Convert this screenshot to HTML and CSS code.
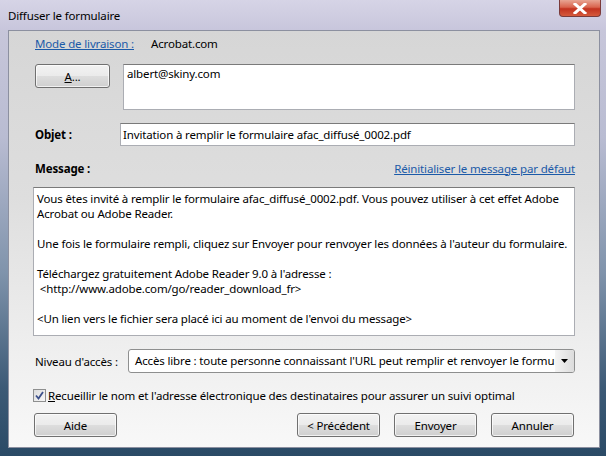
FILE: index.html
```html
<!DOCTYPE html>
<html lang="fr">
<head>
<meta charset="utf-8">
<title>Diffuser le formulaire</title>
<link rel="stylesheet" href="styles.css">
</head>
<body>
<div class="window">
  <div class="titlebar">
    <span class="title">Diffuser le formulaire</span>
    <span class="close"><svg width="14" height="11" viewBox="0 0 14 11"><path d="M2 1 L12 10 M12 1 L2 10" stroke="#fff" stroke-width="3" stroke-linecap="square"/></svg></span>
  </div>
  <div class="client">
    <div class="row row-mode">
      <a class="link">Mode de livraison :</a>
      <span class="mode-value">Acrobat.com</span>
    </div>
    <div class="row row-to">
      <button class="btn btn-a"><u>A</u>...</button>
      <div class="field recipients">albert@skiny.com</div>
    </div>
    <div class="row row-subject">
      <span class="label bold">Objet :</span>
      <div class="field subject">Invitation à remplir le formulaire afac_diffusé_0002.pdf</div>
    </div>
    <div class="row row-msghead">
      <span class="label bold">Message :</span>
      <a class="link">Réinitialiser le message par défaut</a>
    </div>
    <div class="field message">
      <p>Vous êtes invité à remplir le formulaire afac_diffusé_0002.pdf. Vous pouvez utiliser à cet effet Adobe Acrobat ou Adobe Reader.</p>
      <p>Une fois le formulaire rempli, cliquez sur Envoyer pour renvoyer les données à l'auteur du formulaire.</p>
      <p>Téléchargez gratuitement Adobe Reader 9.0 à l'adresse :<br>&nbsp;&lt;http://www.adobe.com/go/reader_download_fr&gt;</p>
      <p>&lt;Un lien vers le fichier sera placé ici au moment de l'envoi du message&gt;</p>
    </div>
    <div class="row row-access">
      <span class="label">Niveau d'accès :</span>
      <div class="select">
        <span class="select-text">Accès libre : toute personne connaissant l'URL peut remplir et renvoyer le formulaire</span>
        <span class="select-arrow"><svg width="7" height="4" viewBox="0 0 7 4"><path d="M0 0 H7 L3.5 4 Z" fill="#000"/></svg></span>
      </div>
    </div>
    <div class="row row-check">
      <span class="checkbox"><svg width="9" height="9" viewBox="0 0 9 9"><path d="M1 4.5 L3.5 7.5 L8 1" fill="none" stroke="#3b4f8a" stroke-width="1.8"/></svg></span>
      <span><u>R</u>ecueillir le nom et l'adresse électronique des destinataires pour assurer un suivi optimal</span>
    </div>
    <div class="row row-buttons">
      <button class="btn">Aide</button>
      <div class="btn-group">
        <button class="btn">&lt; Précédent</button>
        <button class="btn">Envoyer</button>
        <button class="btn">Annuler</button>
      </div>
    </div>
  </div>
</div>
</body>
</html>
```
FILE: styles.css
```css
* { box-sizing: border-box; }
html, body { margin: 0; padding: 0; }
body {
  width: 606px;
  height: 456px;
  overflow: hidden;
  font-family: "Noto Sans", "DejaVu Sans", sans-serif;
  font-size: 11.5px;
  letter-spacing: -0.15px;
  color: #000;
}
.window {
  width: 606px;
  height: 456px;
  display: flex;
  flex-direction: column;
  background: linear-gradient(180deg, #cbc9dc 0%, #b9bcd2 30%, #7f93ab 60%, #3c5a76 85%, #2a4a66 100%);
  position: relative;
}
.titlebar {
  height: 30px;
  flex: none;
  display: flex;
  align-items: center;
  padding-left: 8px;
  background: linear-gradient(180deg, #d6d4e6 0%, #c8c6dc 100%);
}
.title { color: #000; }
.close {
  position: absolute;
  top: 0;
  right: 5px;
  width: 42px;
  height: 17px;
  border: 1px solid #7a3a3a;
  border-top: none;
  border-radius: 0 0 4px 4px;
  background: linear-gradient(180deg, #e8a593 0%, #d9644e 45%, #c2321f 55%, #d55a3c 100%);
  display: flex;
  align-items: center;
  justify-content: center;
}
.client {
  flex: none;
  margin-left: 8px;
  width: 592px;
  height: 418px;
  border: 1px solid #8c90a0;
  background: linear-gradient(180deg, #d6d6d6 0%, #dedede 40%, #eeeeee 75%, #f8f8f8 100%);
  padding: 0 24px 0 26px;
  display: flex;
  flex-direction: column;
}
.row { display: flex; align-items: center; }
.link { color: #1b5aa8; text-decoration: underline; cursor: pointer; }
.bold { font-weight: bold; }
.row-mode { margin-top: 4px; height: 16px; }
.mode-value { margin-left: 17px; }
.row-to { margin-top: 13px; align-items: flex-start; }
.field {
  background: #fff;
  border: 1px solid #abadb3;
  border-top-color: #7a7a7a;
}
.btn {
  font: inherit;
  letter-spacing: inherit;
  color: #000;
  height: 24px;
  width: 83px;
  padding: 0;
  border: 1px solid #707070;
  border-radius: 3px;
  background: linear-gradient(180deg, #f2f2f2 0%, #ebebeb 48%, #dddddd 52%, #cfcfcf 100%);
  box-shadow: inset 0 0 0 1px rgba(255,255,255,0.7);
}
.btn-a { width: 75px; }
.recipients {
  margin-left: 13px;
  flex: 1;
  height: 46px;
  padding: 1px 3px;
}
.row-subject { margin-top: 13px; }
.row-subject .label { width: 85px; }
.subject {
  flex: 1;
  height: 23px;
  padding: 2px 2px;
  line-height: 17px;
}
.row-msghead { margin-top: 14px; height: 16px; justify-content: space-between; }
.message {
  margin-top: 11px;
  margin-left: -2px;
  height: 149px;
  padding: 3px 3px;
  line-height: 15px;
}
.message p { margin: 0 0 15px 0; }
.row-access { margin-top: 13px; }
.row-access .label { width: 93px; }
.select {
  flex: 1;
  height: 24px;
  border: 1px solid #8e8f8f;
  border-radius: 3px;
  background: #fff;
  display: flex;
  overflow: hidden;
}
.select-text {
  flex: 1;
  white-space: nowrap;
  overflow: hidden;
  padding-left: 6px;
  line-height: 22px;
}
.select-arrow {
  width: 19px;
  flex: none;
  background: linear-gradient(90deg, #f4f4f4, #dcdcdc);
  display: flex;
  align-items: center;
  justify-content: center;
}
.row-check { margin-top: 14px; height: 16px; margin-left: -2px; }
.checkbox {
  width: 13px;
  height: 13px;
  border: 1px solid #8e8f8f;
  background: linear-gradient(135deg, #dcdcdc, #f8f8f8);
  display: flex;
  align-items: center;
  justify-content: center;
  margin-right: 2px;
}
.row-buttons { margin-top: 10px; justify-content: space-between; margin-left: -1px; margin-right: 1px; }
.btn-group { display: flex; gap: 14px; }
```
